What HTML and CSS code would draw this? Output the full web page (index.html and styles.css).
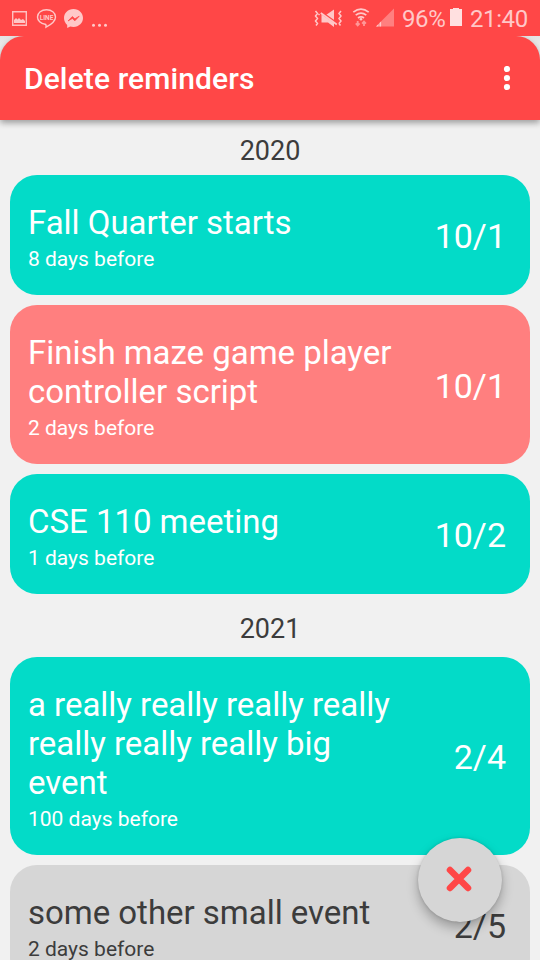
FILE: index.html
```html
<!DOCTYPE html>
<html lang="en">
<head>
<meta charset="utf-8">
<title>Delete reminders</title>
<link rel="stylesheet" href="styles.css">
</head>
<body>
<div class="screen">
  <div class="status">
    <svg class="status-left" width="120" height="36" viewBox="0 0 120 36">
      <path d="M12.7 11.7h13.6v13.6H12.7z" fill="none" stroke="#ffc0c0" stroke-width="1.4"/>
      <path d="M14 23v-3l2-2 1.5 1.5L19 18l2 2 2-1 2 2v2z" fill="#ffc8c8"/>
      <path d="M46.5 9.7c-5 0-9 3.2-9 7.3 0 3.7 3.2 6.700 7.600 7.200 1.300.2 1.200 1 .9 3 3.500-1.800 9.500-5.500 9.500-10.200 0-4.100-4-7.300-9-7.300z" fill="none" stroke="#ffc8c8" stroke-width="1.400"/>
      <text class="line-label" x="46.500" y="19.500" text-anchor="middle" textLength="13.500" lengthAdjust="spacingAndGlyphs">LINE</text>
      <path d="M73.500 9c-5.500 0-9.500 4-9.500 9 0 2.800 1.200 5.200 3.200 6.900V28l3-1.600c1 .3 2.100.5 3.300.5 5.500 0 9.500-4 9.500-8.900s-4-9-9.500-9z" fill="#ffc8c8"/>
      <path d="M68 21l4.300-4.500 2.600 2.300 4.300-2.600-4.300 4.600-2.600-2.300z" fill="#ff4747" stroke="#ff4747" stroke-width=".7"/>
      <circle cx="93.500" cy="25.300" r="1.500" fill="#ffc8c8"/><circle cx="99.500" cy="25.300" r="1.500" fill="#ffc8c8"/><circle cx="105.500" cy="25.300" r="1.500" fill="#ffc8c8"/>
    </svg>
    <svg class="status-signals" width="84" height="36" viewBox="312 0 84 36">
      <path d="M315.500 11l2 2.500-2 2.500 2 2.500-2 2.500 2 2.500-1.500 2M319.500 14l-1 1M341 11l-2 2.500 2 2.500-2 2.500 2 2.500-2 2.500 1.500 2" fill="none" stroke="#ffc8c8" stroke-width="1.500"/>
      <path d="M326 15L334 9.500v12zM321.500 14.500l12.500 8.500v4l-6-4.500h-6.500z" fill="#ffc8c8"/>
      <path d="M322.300 12.300l16 11.500" stroke="#ff4747" stroke-width="1.200"/>
      <path d="M320.800 13l16 11.500" stroke="#ffc8c8" stroke-width="1.800"/>
      <g fill="none" stroke="#ffc8c8" stroke-width="1.700">
        <path d="M353.300 12.200q7.700-6 15.400 0M355.700 15.200q5.300-4.300 10.600 0M358 18q3-2.300 6 0"/>
      </g>
      <circle cx="361" cy="19.200" r="1.300" fill="#ffc8c8"/>
      <path d="M357.700 21v4M355.800 23.300l1.900 2.100 1.900-2.100M364 26v-4M362.100 23.700l1.900-2.100 1.900 2.100" fill="none" stroke="#ff9797" stroke-width="1.800"/>
      <path d="M376 26.500L394 8.500v18z" fill="#ff8080"/>
      <path d="M376 26.500l2.500-2.500v2.500zM379.500 26.500V23l1.600-1.500v5z" fill="#ffc8c8"/>
    </svg>
    <span class="percent">96%</span>
    <svg class="battery" width="12" height="36" viewBox="0 0 12 36"><path d="M0 9h3V8h6v1h3v17H0z" fill="#ffe0e0"/></svg>
    <span class="clock">21:40</span>
  </div>
  <div class="bar-wrap">
    <header class="bar">
      <h1>Delete reminders</h1>
      <svg width="8" height="26" viewBox="0 0 8 26" fill="#fff"><circle cx="4" cy="3" r="3.100"/><circle cx="4" cy="12" r="3.100"/><circle cx="4" cy="21" r="3.100"/></svg>
    </header>
  </div>
  <main class="list">
    <h2>2020</h2>
    <article class="card"><div class="info"><p class="title">Fall Quarter starts</p><p class="sub">8 days before</p></div><span class="date">10/1</span></article>
    <article class="card selected"><div class="info"><p class="title">Finish maze game player controller script</p><p class="sub">2 days before</p></div><span class="date">10/1</span></article>
    <article class="card"><div class="info"><p class="title">CSE 110 meeting</p><p class="sub">1 days before</p></div><span class="date">10/2</span></article>
    <h2 class="next">2021</h2>
    <article class="card"><div class="info"><p class="title">a really really really really really really really big event</p><p class="sub">100 days before</p></div><span class="date">2/4</span></article>
    <article class="card small"><div class="info"><p class="title">some other small event</p><p class="sub">2 days before</p></div><span class="date">2/5</span></article>
  </main>
  <button class="fab" aria-label="Cancel"><svg width="28" height="28" viewBox="0 0 28 28"><path d="M5 5l18 18M23 5L5 23" stroke="#ff4747" stroke-width="6.500" stroke-linecap="round"/></svg></button>
</div>
</body>
</html>
```

FILE: styles.css
```css
* { box-sizing: border-box; margin: 0; }
body { font-family: Roboto, sans-serif; background: #f1f1f1; overflow: hidden; }
.screen { position: relative; height: 960px; overflow: hidden; }
.status { height: 36px; display: flex; align-items: center; background: #ff4747; color: #ffc8c8; font-size: 24px; line-height: 36px; }
.status-left { margin-right: 192px; flex: none; }
.status-signals, .battery { flex: none; }
.line-label { font: bold 7px Roboto, sans-serif; fill: #ffc8c8; }
.percent { width: 48px; margin-left: 6px; padding-top: 2px; white-space: nowrap; letter-spacing: -.4px; }
.clock { margin-left: 8px; padding-top: 2px; letter-spacing: -.4px; }
.bar-wrap { background: linear-gradient(#e4e4e4, #f1f1f1 20px); }
.bar { height: 84px; display: flex; align-items: center; justify-content: space-between; padding: 1px 29px 0 24px; background: #ff4747; border-radius: 24px 24px 0 0; box-shadow: 0 3px 6px rgba(0, 0, 0, .35); clip-path: inset(0 0 -12px 0); }
.bar h1 { color: #fff; font-size: 30px; font-weight: 500; letter-spacing: .11px; }
.list { display: flex; flex-direction: column; gap: 10px; padding: 0 10px; }
h2 { height: 45px; padding-top: 15px; text-align: center; font-size: 27px; line-height: 32px; font-weight: 400; color: #3c3c3c; }
h2.next { height: 43px; padding-top: 9px; }
.card { flex: none; display: flex; align-items: center; justify-content: space-between; padding: 28px 24px 22px 18px; border-radius: 27px; background: #03dbc8; color: #fff; }
.card.selected { background: #ff7f7f; }
.card.small { background: #d6d6d6; color: #3c3c3c; }
.info { width: 375px; }
.title { font-size: 33px; line-height: 39px; letter-spacing: -.03px; }
.sub { font-size: 21px; line-height: 25px; margin: 5px 0 1px; }
.date { font-size: 34px; line-height: 39px; margin-bottom: 4px; }
.selected .date { margin-bottom: 3px; }
.fab { position: absolute; left: 418px; top: 838px; width: 84px; height: 84px; border: 0; border-radius: 50%; background: #d6d6d6; display: flex; align-items: center; justify-content: center; padding: 0 2px 2px 0; box-shadow: 0 6px 12px rgba(0, 0, 0, .28), 0 0 3px rgba(0, 0, 0, .15); }
```
